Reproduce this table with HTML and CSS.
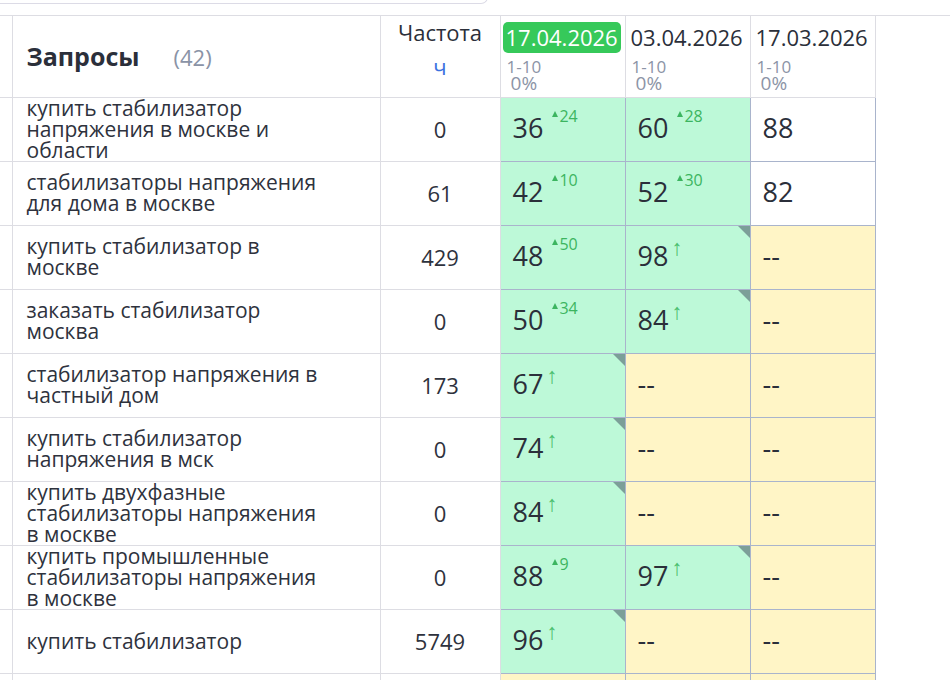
FILE: index.html
```html
<!DOCTYPE html>
<html lang="ru">
<head>
<meta charset="utf-8">
<title>Запросы</title>
<link rel="stylesheet" href="styles.css">
</head>
<body>
<div class="topbox"></div>
<div class="sheet">
<table class="grid">
  <colgroup>
    <col class="c-edge"><col class="c-query"><col class="c-freq"><col class="c-date"><col class="c-date"><col class="c-date">
  </colgroup>
  <thead>
    <tr class="head">
      <th class="edge"></th>
      <th class="qhead"><span class="qtitle">Запросы</span><span class="qcount">(42)</span></th>
      <th class="fhead"><div class="ftitle">Частота</div><div class="fmode">ч</div></th>
      <th class="dhead"><div class="dbox"><span class="date date-active">17.04.2026</span><span class="range"><span>1-10</span><span class="pct">0%</span></span></div></th>
      <th class="dhead"><div class="dbox"><span class="date">03.04.2026</span><span class="range"><span>1-10</span><span class="pct">0%</span></span></div></th>
      <th class="dhead"><div class="dbox"><span class="date">17.03.2026</span><span class="range"><span>1-10</span><span class="pct">0%</span></span></div></th>
    </tr>
  </thead>
  <tbody>
    <tr>
      <td class="edge"></td>
      <td class="q"><div class="qtext">купить стабилизатор напряжения в москве и области</div></td>
      <td class="f">0</td>
      <td class="p up">36<span class="delta"><i class="tri"></i>24</span></td>
      <td class="p up">60<span class="delta"><i class="tri"></i>28</span></td>
      <td class="p plain">88</td>
    </tr>
    <tr>
      <td class="edge"></td>
      <td class="q"><div class="qtext">стабилизаторы напряжения для дома в москве</div></td>
      <td class="f">61</td>
      <td class="p up">42<span class="delta"><i class="tri"></i>10</span></td>
      <td class="p up">52<span class="delta"><i class="tri"></i>30</span></td>
      <td class="p plain">82</td>
    </tr>
    <tr>
      <td class="edge"></td>
      <td class="q"><div class="qtext">купить стабилизатор в москве</div></td>
      <td class="f">429</td>
      <td class="p up">48<span class="delta"><i class="tri"></i>50</span></td>
      <td class="p up new">98<span class="arrow">↑</span></td>
      <td class="p none">--</td>
    </tr>
    <tr>
      <td class="edge"></td>
      <td class="q"><div class="qtext">заказать стабилизатор москва</div></td>
      <td class="f">0</td>
      <td class="p up">50<span class="delta"><i class="tri"></i>34</span></td>
      <td class="p up new">84<span class="arrow">↑</span></td>
      <td class="p none">--</td>
    </tr>
    <tr>
      <td class="edge"></td>
      <td class="q"><div class="qtext">стабилизатор напряжения в частный дом</div></td>
      <td class="f">173</td>
      <td class="p up new">67<span class="arrow">↑</span></td>
      <td class="p none">--</td>
      <td class="p none">--</td>
    </tr>
    <tr>
      <td class="edge"></td>
      <td class="q"><div class="qtext">купить стабилизатор напряжения в мск</div></td>
      <td class="f">0</td>
      <td class="p up new">74<span class="arrow">↑</span></td>
      <td class="p none">--</td>
      <td class="p none">--</td>
    </tr>
    <tr>
      <td class="edge"></td>
      <td class="q"><div class="qtext">купить двухфазные стабилизаторы напряжения в москве</div></td>
      <td class="f">0</td>
      <td class="p up new">84<span class="arrow">↑</span></td>
      <td class="p none">--</td>
      <td class="p none">--</td>
    </tr>
    <tr>
      <td class="edge"></td>
      <td class="q"><div class="qtext">купить промышленные стабилизаторы напряжения в москве</div></td>
      <td class="f">0</td>
      <td class="p up">88<span class="delta"><i class="tri"></i>9</span></td>
      <td class="p up new">97<span class="arrow">↑</span></td>
      <td class="p none">--</td>
    </tr>
    <tr>
      <td class="edge"></td>
      <td class="q"><div class="qtext">купить стабилизатор</div></td>
      <td class="f">5749</td>
      <td class="p up new">96<span class="arrow">↑</span></td>
      <td class="p none">--</td>
      <td class="p none">--</td>
    </tr>
    <tr>
      <td class="edge"></td>
      <td class="q"><div class="qtext"></div></td>
      <td class="f"></td>
      <td class="p none"></td>
      <td class="p none"></td>
      <td class="p none"></td>
    </tr>
  </tbody>
</table>
</div>
</body>
</html>
```

FILE: styles.css
```css
html, body {
  margin: 0;
  padding: 0;
  background: #ffffff;
  overflow: hidden;
}
body {
  font-family: "Open Sans", "Noto Sans", sans-serif;
  color: #2b2f3a;
  width: 950px;
  height: 680px;
}
.topbox {
  width: 487px;
  height: 10px;
  margin-top: -7px;
  border-right: 1px solid #dcdbe6;
  border-bottom: 1px solid #dcdbe6;
  border-bottom-right-radius: 7px;
}
.sheet {
  margin-top: 11px;
  border-top: 1px solid #dddde3;
}
.grid {
  border-collapse: collapse;
  table-layout: fixed;
  width: 875px;
}
.c-edge { width: 12px; }
.c-query { width: 368px; }
.c-freq { width: 120px; }
.c-date { width: 125px; }

.grid th, .grid td {
  padding: 0;
  border: 1px solid #dddde3;
}
.grid tr:first-child th { border-top: none; }
.grid .edge { border-left: none; }

.head { height: 81px; }
.qhead {
  text-align: left;
  padding-left: 14px !important;
  vertical-align: middle;
}
.qtitle {
  font-weight: 700;
  font-size: 25px;
  color: #2b2f3a;
}
.qcount {
  font-weight: 400;
  font-size: 22px;
  color: #8a93a6;
  margin-left: 34px;
}
.fhead {
  vertical-align: top;
  text-align: center;
  font-weight: 400;
}
.ftitle {
  font-size: 22px;
  line-height: 26px;
  margin-top: 3px;
  color: #2b2f3a;
}
.fmode {
  font-size: 22px;
  line-height: 26px;
  margin-top: 8px;
  color: #3b72e0;
}
.dhead {
  vertical-align: top;
  text-align: left;
  font-weight: 400;
  padding: 6px 0 0 2px !important;
}
.dbox {
  display: flex;
  flex-direction: column;
  align-items: flex-start;
}
.date {
  display: inline-block;
  font-size: 22px;
  line-height: 31px;
  padding: 0 3px;
  color: #2b2f3a;
  border-radius: 5px;
  white-space: nowrap;
}
.date-active {
  background: #36c95a;
  color: #ffffff;
}
.range {
  display: flex;
  flex-direction: column;
  align-items: center;
  gap: 1px;
  font-size: 17px;
  line-height: 15px;
  color: #8c94a6;
  margin-left: 4px;
  margin-top: 6px;
}
.range .pct {
  font-size: 19px;
  line-height: 17px;
}

tbody tr { height: 64px; }
.q {
  vertical-align: middle;
  padding-left: 14px !important;
}
.qtext {
  max-width: 294px;
  font-size: 21px;
  line-height: 21px;
  color: #2e323d;
}
.f {
  text-align: center;
  vertical-align: middle;
  font-size: 22px;
  color: #2e323d;
}
.p {
  position: relative;
  vertical-align: middle;
  padding: 0 0 3px 12px !important;
  font-size: 27px;
  color: #2b2f3a;
  border-color: #a9b4cc !important;
}
.p.up { background: #bdf9d8; }
.p.none { background: #fff5c6; }
.p.plain { background: #ffffff; }
.delta {
  display: inline-block;
  vertical-align: top;
  margin-left: 9px;
  margin-top: -1px;
  font-size: 16px;
  color: #3cb560;
  line-height: 17px;
}
.tri {
  display: inline-block;
  width: 0;
  height: 0;
  border-left: 3.5px solid transparent;
  border-right: 3.5px solid transparent;
  border-bottom: 6px solid #3cb560;
  margin-right: 1px;
  vertical-align: 5px;
}
.arrow {
  display: inline-block;
  vertical-align: top;
  margin-left: 3px;
  margin-top: -2px;
  font-size: 22px;
  line-height: 22px;
  color: #4cc070;
}
.p.new::after {
  content: "";
  position: absolute;
  top: 0;
  right: 0;
  width: 0;
  height: 0;
  border-top: 12px solid #7c9f98;
  border-left: 12px solid transparent;
}
```
